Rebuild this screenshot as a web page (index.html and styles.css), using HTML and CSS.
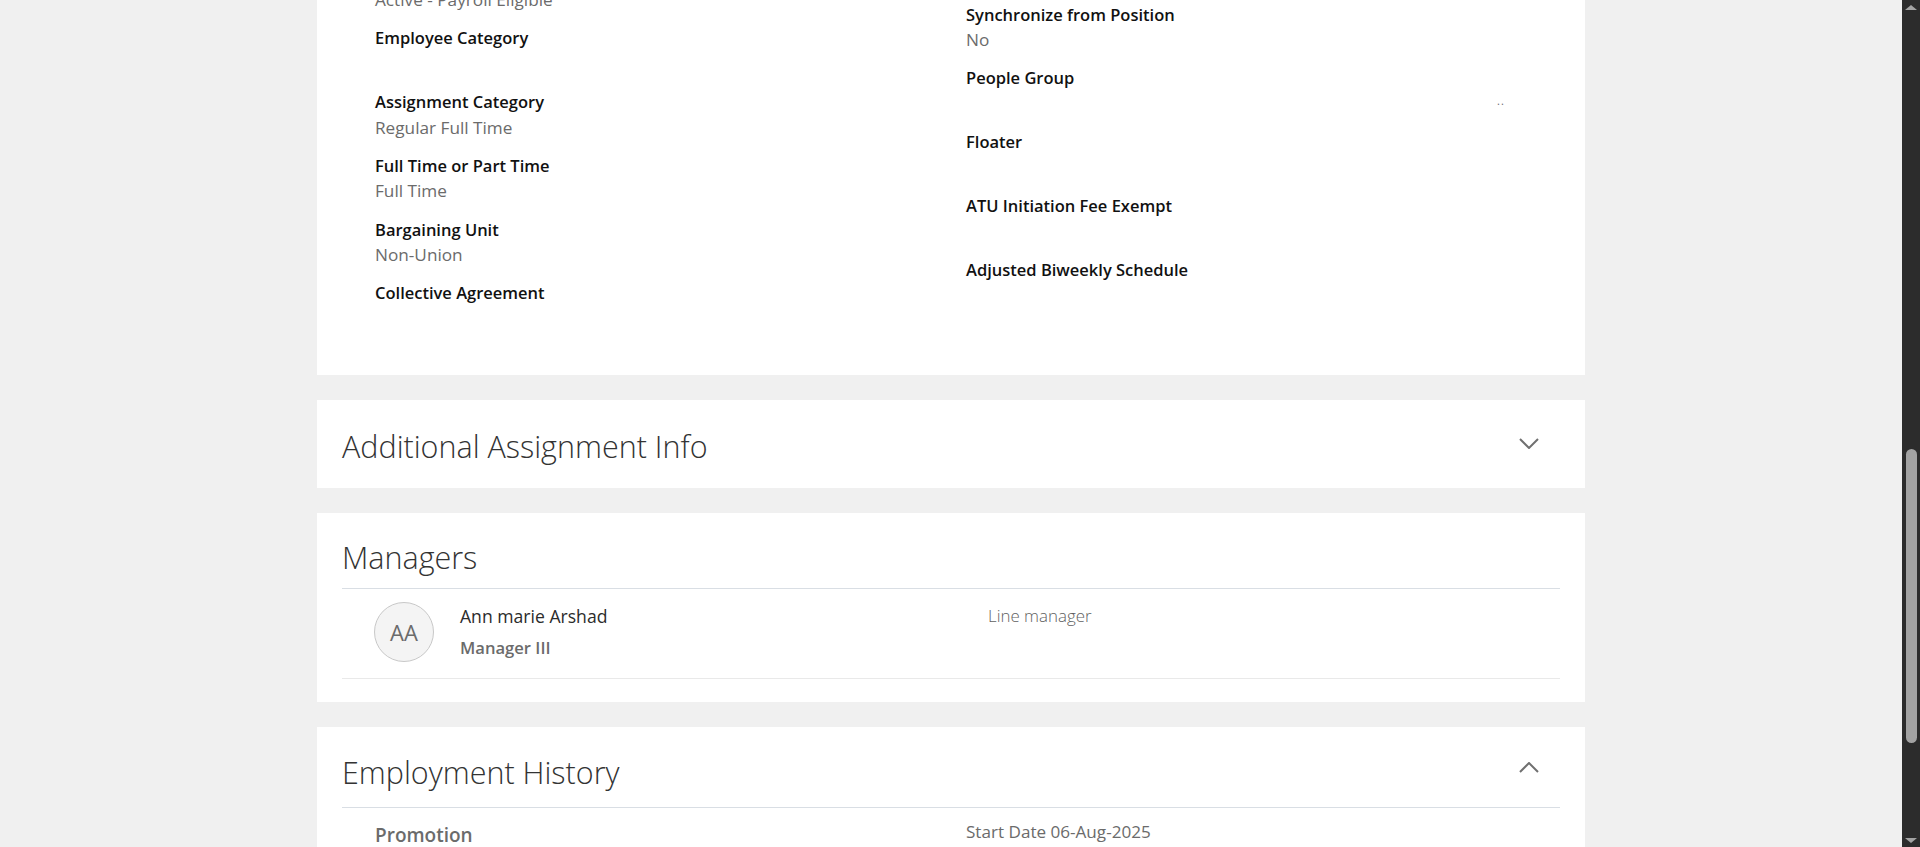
FILE: index.html
```html
<!DOCTYPE html>
<html lang="en">
<head>
<meta charset="utf-8">
<title>Assignment</title>
<link rel="stylesheet" href="styles.css">
</head>
<body>
<div class="viewport">
  <main class="page">
    <div class="content">
      <section class="card card-fields">
        <div class="field-grid">
          <div class="col col-left">
            <div class="field"><div class="label">Assignment Status</div><div class="value">Active - Payroll Eligible</div></div>
            <div class="field"><div class="label">Employee Category</div><div class="value"></div></div>
            <div class="field"><div class="label">Assignment Category</div><div class="value">Regular Full Time</div></div>
            <div class="field"><div class="label">Full Time or Part Time</div><div class="value">Full Time</div></div>
            <div class="field"><div class="label">Bargaining Unit</div><div class="value">Non-Union</div></div>
            <div class="field"><div class="label">Collective Agreement</div><div class="value"></div></div>
          </div>
          <div class="col col-right">
            <div class="field"><div class="label">Synchronize from Position</div><div class="value">No</div></div>
            <div class="field"><div class="label">People Group</div><div class="value value-dots">..</div></div>
            <div class="field"><div class="label">Floater</div><div class="value"></div></div>
            <div class="field"><div class="label">ATU Initiation Fee Exempt</div><div class="value"></div></div>
            <div class="field"><div class="label">Adjusted Biweekly Schedule</div><div class="value"></div></div>
          </div>
        </div>
      </section>

      <section class="card card-collapsed">
        <div class="card-header">
          <h2 class="card-title">Additional Assignment Info</h2>
          <button class="toggle toggle-down" aria-label="Expand">
            <svg width="20" height="11" viewBox="0 0 20 11"><polyline points="1,1 10,10 19,1" fill="none" stroke="#707070" stroke-width="2"/></svg>
          </button>
        </div>
      </section>

      <section class="card card-managers">
        <div class="card-header header-divided">
          <h2 class="card-title">Managers</h2>
        </div>
        <div class="manager-row">
          <div class="manager-person">
            <div class="avatar">AA</div>
            <div class="manager-text">
              <div class="manager-name">Ann marie Arshad</div>
              <div class="manager-job">Manager III</div>
            </div>
          </div>
          <div class="manager-type">Line manager</div>
        </div>
      </section>

      <section class="card card-history">
        <div class="card-header header-divided history-header">
          <h2 class="card-title">Employment History</h2>
          <button class="toggle toggle-up" aria-label="Collapse">
            <svg width="20" height="11" viewBox="0 0 20 11"><polyline points="1,10 10,1 19,10" fill="none" stroke="#707070" stroke-width="2"/></svg>
          </button>
        </div>
        <div class="history-row">
          <div class="history-action">Promotion</div>
          <div class="history-date">Start Date 06-Aug-2025</div>
        </div>
      </section>
    </div>
  </main>
  <div class="scrollbar">
    <div class="sb-btn"><span class="sb-arrow-up"></span></div>
    <div class="sb-thumb"></div>
    <div class="sb-fill"></div>
    <div class="sb-btn"><span class="sb-arrow-down"></span></div>
  </div>
</div>
</body>
</html>
```

FILE: styles.css
```css
* { box-sizing: border-box; }

html, body {
  margin: 0;
  padding: 0;
  height: 847px;
  overflow: hidden;
}

body {
  font-family: "Open Sans", "Noto Sans", "Liberation Sans", sans-serif;
  color: #161513;
  background: #f0f0f0;
}

.viewport {
  display: flex;
  width: 1920px;
  height: 847px;
}

.page {
  flex: 1;
  background: #f0f0f0;
  overflow: hidden;
}

.content {
  width: 1268px;
  margin: -60.3px auto 0;
}

.card {
  background: #ffffff;
  margin-bottom: 25px;
}

/* ---------- field card ---------- */
.card-fields {
  padding: 22px 25px 30.8px 58px;
}

.field-grid {
  display: grid;
  grid-template-columns: 591px 1fr;
}

.col-right {
  padding-top: 40px;
}

.field {
  margin-bottom: 12.75px;
}

.label {
  font-size: 16.5px;
  font-weight: 600;
  line-height: 25.5px;
  height: 25.5px;
  color: #111111;
  white-space: nowrap;
}

.value {
  font-size: 17.2px;
  font-weight: 400;
  line-height: 25.5px;
  height: 25.5px;
  color: #6b6b6b;
  white-space: nowrap;
}

.value-dots {
  font-size: 11px;
  line-height: 20px;
  padding-left: 531px;
  letter-spacing: 1px;
}

/* ---------- headers ---------- */
.card-header {
  display: flex;
  align-items: center;
  justify-content: space-between;
}

.card-title {
  margin: 0;
  font-size: 30.5px;
  font-weight: 300;
  line-height: 40px;
  color: #333333;
  white-space: nowrap;
}

.toggle {
  width: 20px;
  height: 11px;
  padding: 0;
  border: 0;
  background: transparent;
  display: flex;
  margin-right: 21px;
}

.toggle-down { margin-bottom: 4.6px; }
.toggle-up { margin-bottom: 8.8px; }

.card-collapsed {
  padding: 25.7px 25px 22.3px 25px;
}

.header-divided {
  border-bottom: 1px solid #d9dee4;
}

/* ---------- managers ---------- */
.card-managers {
  padding: 23.7px 25px 22.4px 25px;
}

.card-managers .card-header {
  padding-bottom: 11.6px;
}

.manager-row {
  display: grid;
  grid-template-columns: 614px 1fr;
  padding: 12.7px 0 16.3px 32px;
  border-bottom: 1px solid #e9e9e9;
}

.manager-person {
  display: flex;
  align-items: flex-start;
  gap: 26px;
}

.avatar {
  width: 60px;
  height: 60px;
  border-radius: 50%;
  background: #f4f4f4;
  border: 1px solid #c8c8c8;
  display: flex;
  align-items: center;
  justify-content: center;
  font-size: 22px;
  color: #6b6b6b;
  font-weight: 400;
}

.manager-text {
  margin-top: 1.9px;
}

.manager-name {
  font-size: 17.6px;
  line-height: 24px;
  color: #2b2b2b;
}

.manager-job {
  margin-top: 8px;
  font-size: 16.6px;
  font-weight: 600;
  line-height: 24px;
  color: #6b6b6b;
}

.manager-type {
  margin-top: 1.9px;
  font-size: 16.9px;
  font-weight: 300;
  line-height: 24px;
  color: #5f5f5f;
}

/* ---------- history ---------- */
.card-history {
  padding: 25.4px 25px 30px 25px;
}

.history-header {
  padding-bottom: 14.9px;
}

.history-row {
  display: grid;
  grid-template-columns: 591px 1fr;
  padding: 14px 0 0 33px;
}

.history-action {
  font-size: 19px;
  font-weight: 600;
  line-height: 26px;
  color: #6b6b6b;
}

.history-date {
  margin-top: -3px;
  font-size: 17.1px;
  font-weight: 400;
  line-height: 26px;
  color: #6b6b6b;
}

/* ---------- scrollbar ---------- */
.scrollbar {
  width: 18px;
  height: 847px;
  background: #2c2c2c;
  display: flex;
  flex-direction: column;
  align-items: center;
}

.sb-btn {
  width: 18px;
  height: 14px;
  display: flex;
  align-items: center;
  justify-content: center;
  flex: none;
}

.sb-arrow-up {
  width: 0;
  height: 0;
  border-left: 6px solid transparent;
  border-right: 6px solid transparent;
  border-bottom: 5px solid #a3a3a3;
}

.sb-arrow-down {
  width: 0;
  height: 0;
  border-left: 6px solid transparent;
  border-right: 6px solid transparent;
  border-top: 5px solid #a3a3a3;
}

.sb-thumb {
  flex: none;
  width: 11px;
  height: 294px;
  margin-top: 435px;
  border-radius: 6px;
  background: #a3a3a3;
}

.sb-fill {
  flex: 1;
}
```
